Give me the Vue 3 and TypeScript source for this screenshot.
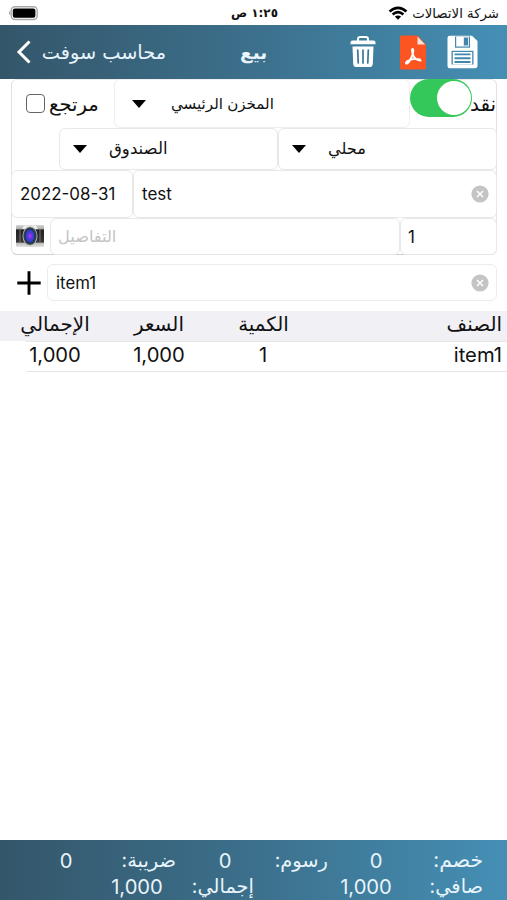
<script setup lang="ts">
import { ref } from 'vue'

interface Column { key: string; label: string }
interface Total { key: string; label: string; value: string }

const date = ref('2022-08-31')
const customer = ref('test')
const item = ref('item1')

const columns: Column[] = [
  { key: 'amount', label: 'الإجمالي' },
  { key: 'price', label: 'السعر' },
  { key: 'qty', label: 'الكمية' },
  { key: 'name', label: 'الصنف' },
]
const rows: Record<string, string>[] = [{ amount: '1,000', price: '1,000', qty: '1', name: 'item1' }]

const totals: Total[] = [
  { key: 'tax', label: 'ضريبة:', value: '0' },
  { key: 'fees', label: 'رسوم:', value: '0' },
  { key: 'discount', label: 'خصم:', value: '0' },
  { key: 'sum', label: 'إجمالي:', value: '1,000' },
  { key: 'net', label: 'صافي:', value: '1,000' },
]
</script>

<template>
  <main class="screen">
    <div class="status">
      <svg class="battery" width="32" height="16" viewBox="0 0 32 16">
        <path d="M2.3 5.6Q-.4 8 2.3 10.4Z" fill="#aaa" />
        <rect x="3.2" y="1.7" width="26" height="12.8" rx="3.7" fill="#fff" stroke="#aaa" stroke-width="1.4" />
        <rect x="4.8" y="3.5" width="22.6" height="9.3" rx="2" fill="#000" />
      </svg>
      <span class="time" dir="rtl">١:٢٥ ص</span>
      <svg class="wifi" width="20" height="15" viewBox="0 0 20 15">
        <path d="M1.6 5.4Q10-1.8 18.4 5.4M4.6 8.5Q10 3.9 15.4 8.5" fill="none" stroke="#000" stroke-width="2.7" />
        <path d="M6.9 10.6Q10 8.3 13.1 10.6L10 13.8Z" />
      </svg>
      <span class="carrier" dir="rtl">شركة الاتصالات</span>
    </div>

    <header class="bar">
      <svg class="back" width="16" height="26" viewBox="0 0 16 26">
        <path d="M13.5 2.5 3 13 13.5 23.5" fill="none" stroke="#fff" stroke-width="3" />
      </svg>
      <span class="app" dir="rtl">محاسب سوفت</span>
      <h1 class="title">بيع</h1>
      <svg class="trash" width="26" height="32" viewBox="0 0 26 32">
        <path d="M8 5V3.2Q8 1 10.2 1H15.8Q18 1 18 3.2V5" fill="none" stroke="#fff" stroke-width="2" />
        <path d="M2.5 4.5H23.5Q25.5 4.5 25.5 6.5V8.3H.5V6.5Q.5 4.5 2.5 4.5ZM2.5 10.5H23.5L22.8 28Q22.5 31 20 31H6Q3.5 31 3.2 28Z" fill="#fff" />
        <path d="M7.7 14 8.2 27M13 14V27M18.3 14 17.8 27" stroke="#3d7796" stroke-width="1.7" stroke-linecap="round" />
      </svg>
      <svg class="pdf" width="26" height="35" viewBox="0 0 26 35">
        <path d="M1.5.5H17.5L26 9.5V33Q26 34.5 24.5 34.5H1.5Q0 34.5 0 33V2Q0 .5 1.5.5Z" fill="#fc5522" />
        <path d="M17.5 1.5V9.5H25Z" fill="#f6e4df" />
        <path d="M12.2 14C11.4 15 12.4 18 13.2 20.4C14.4 23.2 17 25.3 20.6 25.6M13.2 14.4C13.8 18 12 22 9.4 26.2C8.4 28 6.8 29 6 28.4C5.4 27.4 7 26.2 9.6 25.2C13 23.8 17 23.6 20 24.4" fill="none" stroke="#fff" stroke-width="1.9" stroke-linecap="round" stroke-linejoin="round" />
      </svg>
      <svg class="save" width="31" height="34" viewBox="0 0 31 34">
        <path d="M2.5.7H25L30.5 6V31Q30.5 33.3 28 33.3H2.5Q.5 33.3.5 31V3Q.5.7 2.5.7Z" fill="#fff" />
        <path d="M8 1.5H23V12.7H8Z" fill="#4287ab" />
        <path d="M9.2 1.5H21.8V11.5H9.2Z" fill="#fff" />
        <path d="M16.8 2.5H21V10.5H16.8Z" fill="#4287ab" />
        <path d="M4.5 15.8H26.5V29.5H4.5Z" fill="#4287ab" />
        <path d="M5.8 17H25.2V29.5H5.8Z" fill="#fff" />
        <path d="M7.5 19.4H23.5M7.5 23.2H23.5M7.5 27H23.5" stroke="#4287ab" stroke-width="1.9" />
      </svg>
    </header>

    <section class="form">
      <div class="line first">
        <div class="return"><span class="check"></span><span class="return-label">مرتجع</span></div>
        <div class="field store"><i class="caret"></i><span>المخزن الرئيسي</span></div>
        <div class="cash"><span class="switch"><i></i></span><span class="cash-label">نقد</span></div>
      </div>
      <div class="line second">
        <div class="field fund"><i class="caret"></i><span>الصندوق</span></div>
        <div class="field currency"><i class="caret"></i><span>محلي</span></div>
      </div>
      <div class="line third">
        <div class="field date">{{ date }}</div>
        <div class="field grow">{{ customer }}
          <svg class="clear" width="18" height="18" viewBox="0 0 18 18"><circle cx="9" cy="9" r="8.6" fill="#c4c4c6" /><path d="m6 6 6 6m0-6-6 6" stroke="#fff" stroke-width="1.5" /></svg>
        </div>
      </div>
      <div class="line fourth">
        <div class="camera">
          <svg width="30" height="24" viewBox="0 0 30 24">
            <defs>
              <linearGradient id="body" x2="0" y2="1"><stop stop-color="#d7d7d7" /><stop offset=".18" stop-color="#aaa" /><stop offset=".22" stop-color="#202020" /><stop offset=".78" stop-color="#363636" /><stop offset=".82" stop-color="#bbb" /><stop offset="1" stop-color="#e4e4e4" /></linearGradient>
              <radialGradient id="glass"><stop stop-color="#c43df0" /><stop offset=".4" stop-color="#6333e3" /><stop offset=".8" stop-color="#2f45cc" /><stop offset="1" stop-color="#1b2b66" /></radialGradient>
            </defs>
            <rect x="1" y="1" width="28" height="22" rx="1" fill="url(#body)" />
            <path d="M9 1.5H21L23 5H7Z" fill="#eee" />
            <path d="M5 5V19M25 5V19" stroke="#777" />
            <ellipse cx="15" cy="12" rx="7.5" ry="9.8" fill="#b5b5b5" />
            <ellipse cx="15" cy="12" rx="6.6" ry="8.8" fill="#303c50" />
            <ellipse cx="15" cy="12" rx="4.8" ry="6.8" fill="url(#glass)" />
          </svg>
        </div>
        <div class="field details"><span>التفاصيل</span></div>
        <div class="field count">1</div>
      </div>
    </section>

    <div class="picker">
      <svg class="plus" width="24" height="24" viewBox="0 0 24 24"><path d="M12 .3V23.7M.3 12H23.7" stroke="#000" stroke-width="2.9" /></svg>
      <div class="field grow item">{{ item }}
        <svg class="clear" width="18" height="18" viewBox="0 0 18 18"><circle cx="9" cy="9" r="8.6" fill="#c4c4c6" /><path d="m6 6 6 6m0-6-6 6" stroke="#fff" stroke-width="1.5" /></svg>
      </div>
    </div>

    <section class="table">
      <div class="cells head">
        <span v-for="c in columns" :key="c.key" :class="c.key">{{ c.label }}</span>
      </div>
      <div v-for="(row, i) in rows" :key="i" class="cells row">
        <span v-for="c in columns" :key="c.key" :class="c.key">{{ row[c.key] }}</span>
      </div>
    </section>

    <footer class="totals">
      <div v-for="t in totals" :key="t.key" class="total" :class="'t-' + t.key">
        <span class="value">{{ t.value }}</span><span class="label" dir="rtl">{{ t.label }}</span>
      </div>
    </footer>
  </main>
</template>

<style>
body { margin: 0; background: #fff; }
</style>

<style scoped>
* { box-sizing: border-box; }
.screen { width: 507px; height: 900px; display: flex; flex-direction: column; overflow: hidden; color: #111; font-family: Inter, "DejaVu Sans", sans-serif; font-size: 17px; white-space: nowrap; }
svg { display: block; flex: none; }
.status { height: 25px; flex: none; display: flex; align-items: center; padding: 1px 8px 0 8px; font-family: "DejaVu Sans", sans-serif; font-size: 13.3px; }
.time { width: 48px; margin-left: 190px; font-weight: 700; font-size: 12px; }
.wifi { margin-left: 110px; }
.carrier { margin-left: auto; }
.bar { height: 54px; flex: none; display: flex; align-items: center; color: #e8f4fb; background: linear-gradient(90deg, #34566a, #3c708c 50%, #458fb5); font-family: "DejaVu Sans", sans-serif; }
.back { margin-left: 16px; }
.app { width: 125px; margin-left: 9px; font-size: 19.3px; }
.title { width: 28px; margin: 0 0 0 74px; font-size: 18.6px; }
.trash { margin-left: 82px; }
.pdf { margin-left: 24px; }
.save { margin-left: 21px; }
.form { height: 176px; flex: none; margin: 0 10px 0 11px; border: 1px solid #e2e2e2; border-bottom-color: #d0d0d0; border-top-color: #e9e9e9; border-radius: 6px; }
.line { display: flex; margin: 0 -1px; }
.first { height: 49px; margin-top: -1px; }
.second { height: 42px; padding-left: 48px; }
.third { height: 48px; }
.fourth { height: 37px; }
.field { display: flex; align-items: center; border: 1px solid #e8e8e8; border-radius: 6px; background: #fff; }
.grow { flex: 1; padding: 0 7px 0 8px; }
.clear { margin-left: auto; }
.return { width: 103px; display: flex; align-items: center; padding-left: 15px; }
.check { width: 19px; height: 19px; flex: none; border: 1.5px solid #666; border-radius: 4px; }
.return-label { margin-left: 4px; font-size: 19.6px; }
.store { width: 296px; padding-left: 17px; font-size: 15.1px; border-color: #efefef; }
.caret { width: 0; height: 0; border: 7px solid transparent; border-top: 8px solid #000; border-bottom: 0; }
.store span { margin-left: 25px; }
.cash { display: flex; align-items: center; width: 87px; }
.switch { width: 62px; height: 38px; margin-top: -11px; border-radius: 19px; background: #34c759; padding: 2px; flex: none; position: relative; z-index: 1; }
.switch i { display: block; margin-left: 25px; width: 34px; height: 34px; border-radius: 50%; background: #fff; }
.cash-label { font-size: 20px; margin-left: -2px; }
.fund { width: 219px; padding-left: 13px; font-size: 16.6px; }
.fund span, .currency span { margin: -2px 0 0 22px; }
.currency { width: 219px; padding-left: 13px; font-size: 16.2px; }
.date { width: 122px; padding: 0 0 1px 8px; font-size: 16.9px; }
.camera { width: 39px; padding: 6px 0 0 4px; }
.details { width: 350px; padding: 0 0 2px 7px; color: #c4c4c6; font-size: 16.2px; }
.count { width: 97px; padding-left: 7px; }
.picker { height: 37px; flex: none; display: flex; align-items: center; margin: 9px 10px 9px 17px; }
.item { height: 37px; margin-left: 6px; border-color: #ececec; font-size: 16.8px; }
.table { flex: 1; margin-top: 1px; font-size: 20.2px; }
.cells { display: flex; align-items: center; }
.cells span { text-align: center; }
.cells .amount { width: 110px; }
.cells .price { width: 98px; }
.cells .qty { width: 111px; }
.cells .name { flex: 1; text-align: right; padding-right: 5px; }
.head { height: 30px; background: #f0f0f5; font-size: 19.9px; padding-bottom: 5px; }
.row { height: 31px; margin-left: 26px; padding-bottom: 4px; border: solid #e6e6e6; border-width: 1px 0; }
.row .amount { width: 58px; }
.row .price { width: 150px; }
.row .qty { width: 58px; }
.totals { height: 60px; flex: none; display: grid; grid-template: 28px 24px / 176px 152px 155px; padding: 6px 24px 0 0; background: linear-gradient(90deg, #34566a, #3c708c 50%, #458fb5); color: #e8f4fb; font-size: 20.2px; }
.total { display: flex; align-items: center; justify-content: flex-end; }
.totals .value { width: 54px; text-align: center; }
.totals .label { width: 58px; text-align: right; font-size: 19.4px; margin-top: -1px; }
.t-tax .value { margin-right: 25px; }
.t-fees .value { margin-right: 18px; }
.t-discount .value { margin-right: 22px; }
.t-discount .label { font-size: 20.4px; }
.t-sum { grid-column: 1 / 3; padding-right: 74px; }
.t-sum .value { margin-right: 26px; }
.t-sum .label { width: 64px; }
.t-net .value { margin-right: 32px; }
</style>
